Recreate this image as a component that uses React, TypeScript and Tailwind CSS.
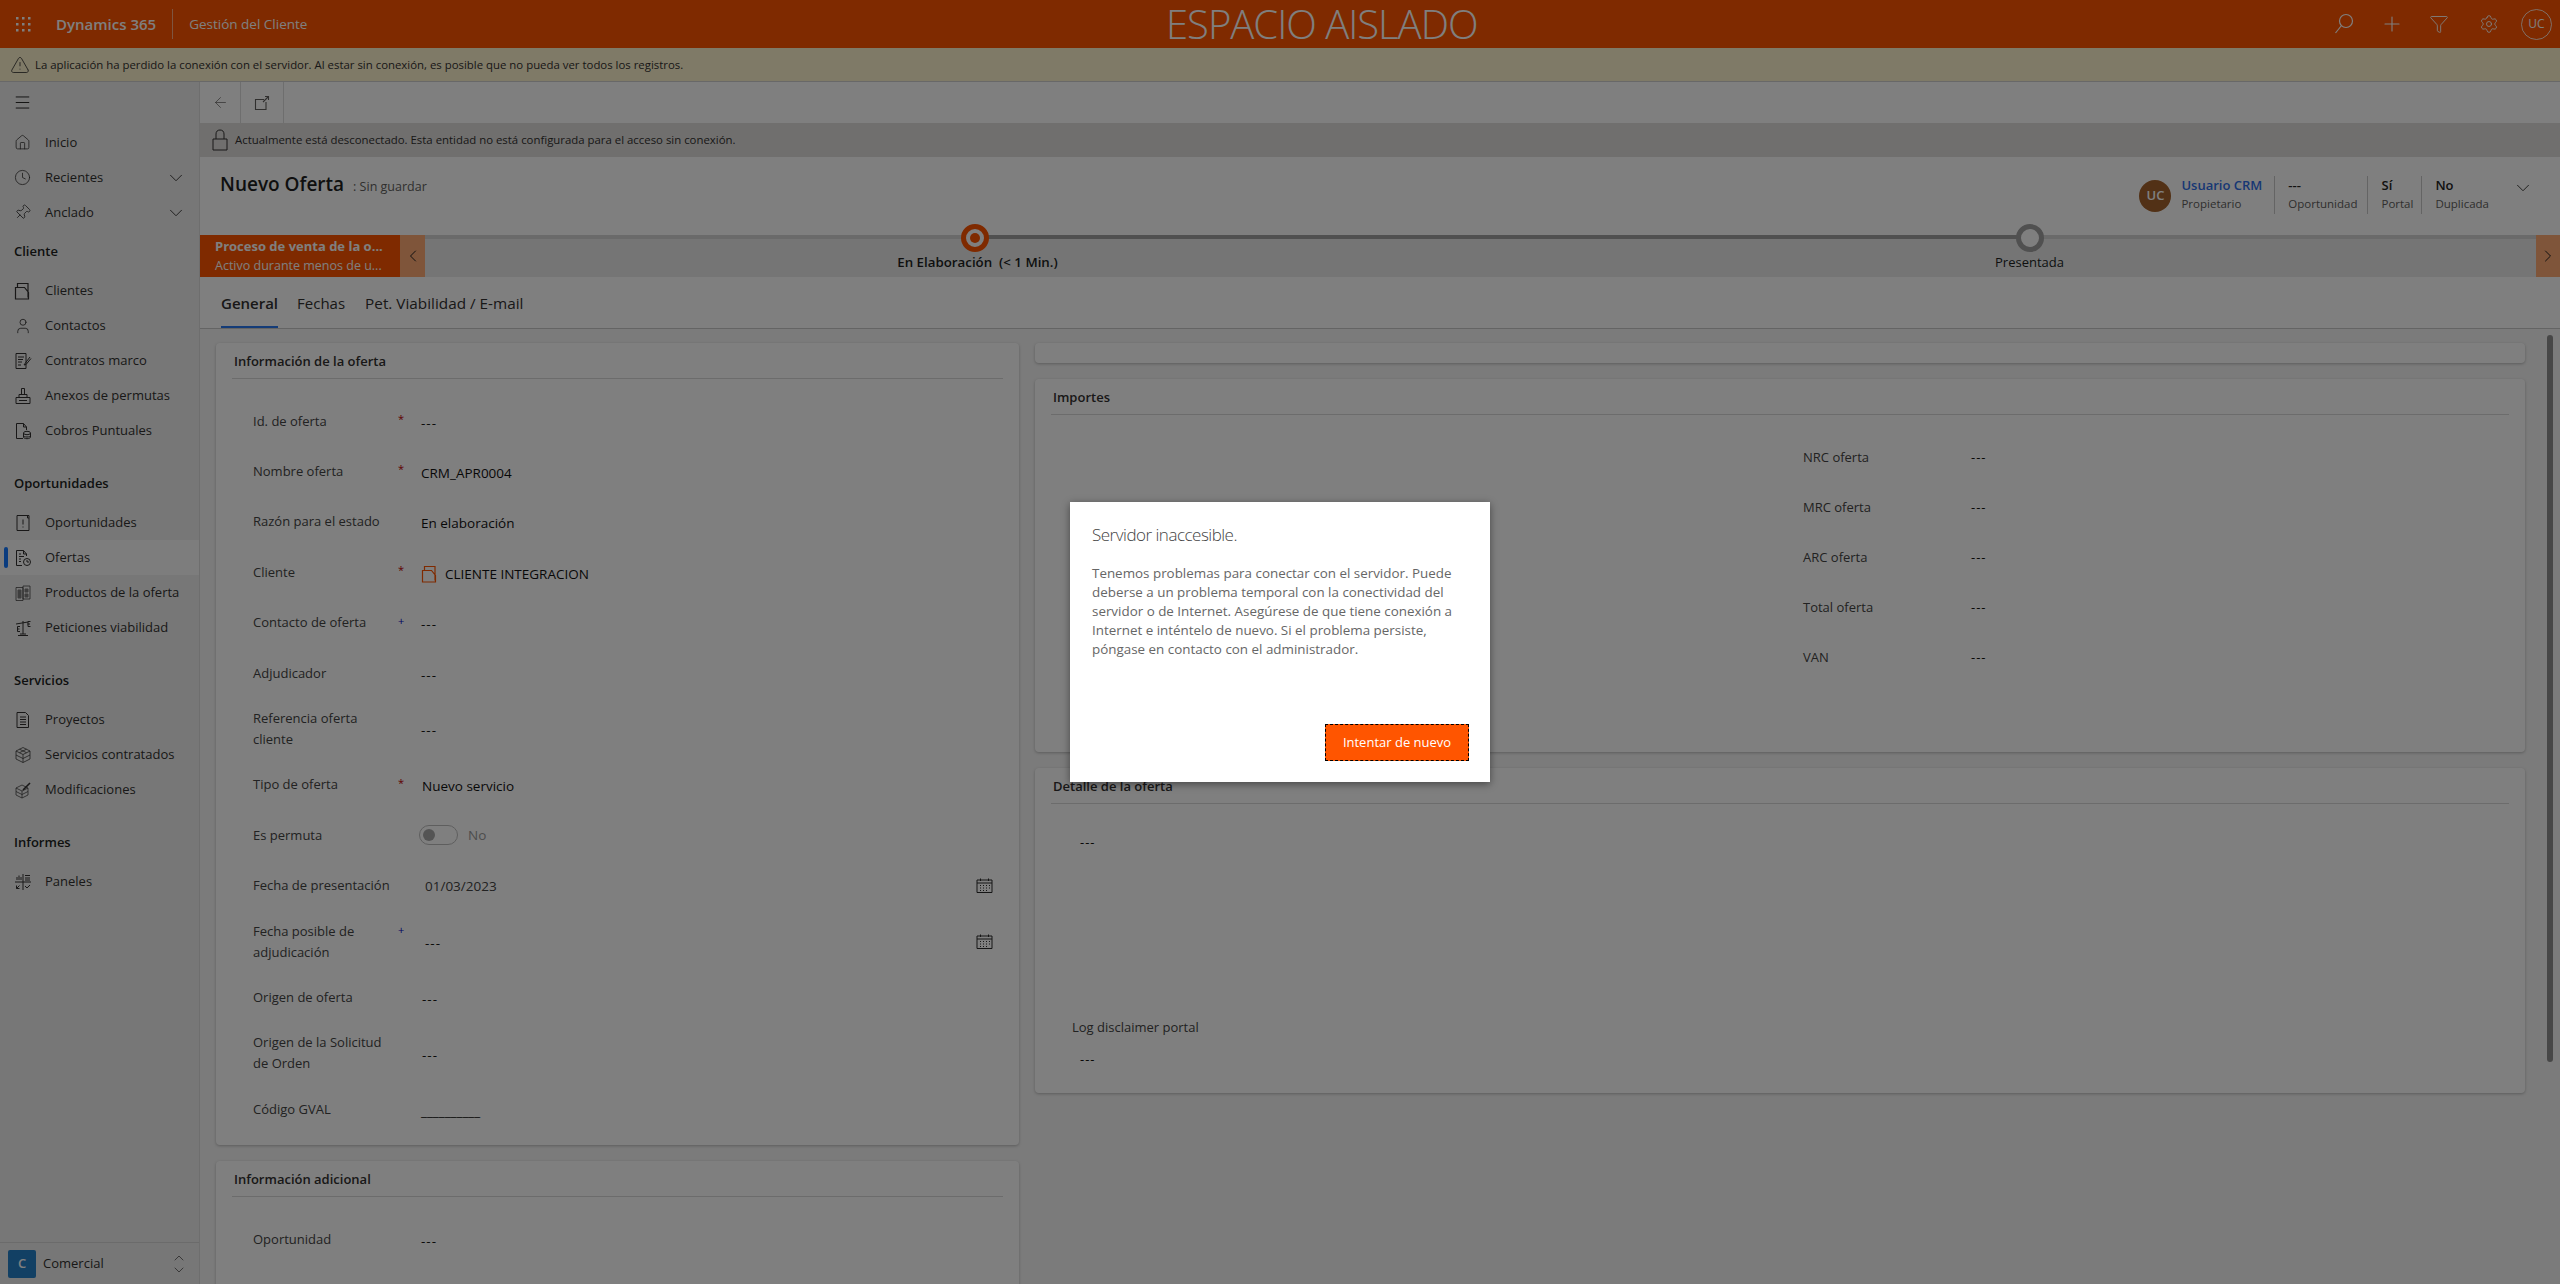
import type React from "react"
import { ChevronDown, ChevronLeft, ChevronRight, ChevronUp, Clock, Filter, Home, Menu, Pin, Plus, Settings, User, ArrowLeft, TriangleAlert } from "lucide-react"

const Doc: React.FC<{ children?: React.ReactNode }> = ({ children }) => (
  <svg width="18" height="18" viewBox="0 0 18 18" fill="none" stroke="currentColor" strokeWidth="1">
    {children}
  </svg>
)

const ClientIcon = ({ className = "" }: { className?: string }) => (
  <svg width="16" height="18" viewBox="0 0 16 18" fill="none" stroke="currentColor" strokeWidth="1.2" className={className}>
    <path d="M1.5 5.5h9l4 5v6.5h-13zM3.5 5.5v-4h10.500v14" />
  </svg>
)

const sideIcons: Record<string, React.ReactNode> = {
  clientes: <ClientIcon />,
  contactos: <User size={18} strokeWidth={1.1} />,
  contratos: (
    <Doc>
      <path d="M2 1.500h10v15H2zM4 5h6M4 7.500h5M4 10h4M4 13h3M16 5l-5 6.500-1 1.500 2-.5 5-6" />
    </Doc>
  ),
  anexos: (
    <Doc>
      <path d="M7.500 1.500h3v6h-3zM5 7.500h8v3H5zM2 10.500h14v6H2zM5 13.500h8" />
    </Doc>
  ),
  cobros: (
    <Doc>
      <path d="M9 16.500H2.500v-15h7l3 3.500v3M9.500 1.500V5h3" />
      <ellipse cx="13" cy="11" rx="3.500" ry="1.700" />
      <path d="M9.500 11v4c0 1 1.500 1.700 3.500 1.700s3.500-.7 3.500-1.700v-4M9.500 13.500c0 1 1.500 1.500 3.500 1.500s3.500-.5 3.500-1.500" />
    </Doc>
  ),
  oportunidades: (
    <Doc>
      <path d="M3 1.500h12v15H3zM15 4h-1.500V1.500M9 5.500v5M9 12.500v1" />
    </Doc>
  ),
  ofertas: (
    <Doc>
      <path d="M8 16.500H2.500v-15h7l3 3.500v2M9.500 1.500V5h3M5 5h2M5 7.500h5M5 10h2M5 12.500h2" />
      <circle cx="13" cy="13" r="3.500" />
      <path d="M13 11v2h2" />
    </Doc>
  ),
  productos: (
    <Doc>
      <path d="M2 3.500h7v13H2zM9 2h7v13H9z" opacity=".7" />
      <path d="M4 6h3v8H4zM11 5h3v3h-3zM11 10h3v3h-3z" fill="currentColor" opacity=".6" />
    </Doc>
  ),
  peticiones: (
    <Doc>
      <path d="M9 2v13M4 16.500h10M6 15h6M2 5l12-2" />
      <path d="M6 7.500H3.500v5H6M3 10h2.500M16.500 2.500h-2.500v5h2.500M13.500 5H16" />
    </Doc>
  ),
  proyectos: (
    <Doc>
      <path d="M3 1.500h8.500l3 3v12H3zM6 6h6M6 8.500h6M6 11h6M6 13.500h6" />
    </Doc>
  ),
  servicios: (
    <Doc>
      <path d="M9 1.500l7 3.500v8l-7 3.500L2 13V5zM2 5l7 3.500L16 5M9 8.500v8M5.500 3.200l7 3.500M12.500 3.200l-7 3.500M2 9l7 3.500L16 9" opacity=".75" />
    </Doc>
  ),
  modificaciones: (
    <Doc>
      <path d="M8 4l6 3v7l-6 3-6-3V7zM2 7l6 3 6-3M8 10v7M2 10.500l6 3 6-3" opacity=".7" />
      <path d="M9 9l7-7" strokeWidth="1.6" />
    </Doc>
  ),
  paneles: (
    <Doc>
      <path d="M9 1v16M1 9h16M11 2.500h5M11 5h5M11 7h5M3 7V4M5 7V2.500M7 7V4M11 13l2 2 3-3M2.500 15.500l3-3M2.500 12.500v3h3" />
    </Doc>
  ),
}

const NavItem = ({ icon, label, active, chevron }: { icon: React.ReactNode; label: string; active?: boolean; chevron?: boolean }) => (
  <div className={`relative flex h-[35px] items-center pl-[14px] pr-[12px] ${active ? "bg-[#fbfbfb]" : ""}`}>
    {active && <span className="absolute left-[4px] top-[7px] h-[21px] w-[4px] rounded-sm bg-[#1478ff]" />}
    <span className="flex w-[31px] shrink-0 text-[#323130]">{icon}</span>
    <span className="flex-1 text-[13px] text-[#323130]">{label}</span>
    {chevron && <ChevronDown size={22} strokeWidth={1} className="text-[#323130]" />}
  </div>
)

const NavGroup = ({ title, children, first }: { title: string; children: React.ReactNode; first?: boolean }) => (
  <div className={first ? "mt-[4px]" : "mt-[18px]"}>
    <div className="flex h-[35px] items-center pl-[14px] text-[13px] font-semibold text-[#201f1e]">{title}</div>
    <div className="mt-[4px]">{children}</div>
  </div>
)

const Sidebar = () => (
  <aside className="flex w-[200px] shrink-0 flex-col border-r border-[#dcdcdc] bg-[#efefef]">
    <div className="flex h-[41px] items-center pl-[13px] text-[#201f1e]">
      <Menu size={19} strokeWidth={1.2} />
    </div>
    <div className="flex-1 pt-[2px]">
      <NavItem icon={<Home size={17} strokeWidth={1.1} />} label="Inicio" />
      <NavItem icon={<Clock size={17} strokeWidth={1.1} />} label="Recientes" chevron />
      <NavItem icon={<Pin size={17} strokeWidth={1.1} className="rotate-45" />} label="Anclado" chevron />
      <NavGroup title="Cliente" first>
        <NavItem icon={sideIcons.clientes} label="Clientes" />
        <NavItem icon={sideIcons.contactos} label="Contactos" />
        <NavItem icon={sideIcons.contratos} label="Contratos marco" />
        <NavItem icon={sideIcons.anexos} label="Anexos de permutas" />
        <NavItem icon={sideIcons.cobros} label="Cobros Puntuales" />
      </NavGroup>
      <NavGroup title="Oportunidades">
        <NavItem icon={sideIcons.oportunidades} label="Oportunidades" />
        <NavItem icon={sideIcons.ofertas} label="Ofertas" active />
        <NavItem icon={sideIcons.productos} label="Productos de la oferta" />
        <NavItem icon={sideIcons.peticiones} label="Peticiones viabilidad" />
      </NavGroup>
      <NavGroup title="Servicios">
        <NavItem icon={sideIcons.proyectos} label="Proyectos" />
        <NavItem icon={sideIcons.servicios} label="Servicios contratados" />
        <NavItem icon={sideIcons.modificaciones} label="Modificaciones" />
      </NavGroup>
      <NavGroup title="Informes">
        <NavItem icon={sideIcons.paneles} label="Paneles" />
      </NavGroup>
    </div>
    <div className="flex h-[42px] items-center border-t border-[#d6d6d6] pl-[8px] pr-[12px]">
      <span className="flex h-[28px] w-[28px] items-center justify-center rounded-[2px] bg-[#2480c8] text-[13px] font-semibold text-white">C</span>
      <span className="ml-[7px] flex-1 text-[13px] text-[#323130]">Comercial</span>
      <span className="flex flex-col items-center text-[#323130]">
        <ChevronUp size={16} strokeWidth={1} className="-mb-[2px]" />
        <ChevronDown size={16} strokeWidth={1} className="-mt-[2px]" />
      </span>
    </div>
  </aside>
)

const CalendarIcon = () => (
  <svg width="17" height="15" viewBox="0 0 17 15" fill="none" stroke="#2a2a2a" strokeWidth="1">
    <path d="M1 2h15v12.500H1zM1 5h15M4.500 .5v2.500M12.500 .5v2.500" />
    <path d="M4 7.500h1M7 7.500h1M10 7.500h1M13 7.500h1M4 10h1M7 10h1M10 10h1M13 10h1M4 12.500h1M7 12.500h1M10 12.500h1" />
  </svg>
)

const Dash = () => <span className="tracking-[1px]">---</span>

const Field = ({ label, mark, tall, children, right }: { label: React.ReactNode; mark?: "req" | "rec"; tall?: boolean; children: React.ReactNode; right?: React.ReactNode }) => (
  <div className={`flex ${tall ? "h-[61.4px]" : "h-[50.4px]"} items-center pr-[26px]`}>
    <div className="w-[145px] shrink-0 text-[13px] leading-[21px] text-[#444]">{label}</div>
    <div className={`w-[23px] shrink-0 self-start text-[11px] leading-none ${tall ? "mt-[13px]" : "mt-[17px]"} ${mark === "req" ? "text-[#c00000]" : "text-[#0000c0]"}`}>
      {mark === "req" ? "*" : mark === "rec" ? "+" : ""}
    </div>
    <div className="flex-1 pt-[3px] text-[13.500px] font-medium text-[#111]">{children}</div>
    {right}
  </div>
)

const Card = ({ title, className = "", children }: { title?: string; className?: string; children?: React.ReactNode }) => (
  <section className={`rounded-[4px] bg-white shadow-[0_1px_3px_rgba(0,0,0,0.25)] ${className}`}>
    {title && (
      <div className="mx-[16px] flex h-[36px] items-center border-b border-[#d8d8d8] px-[2px] pt-[3px] text-[13px] font-semibold text-[#323130]">{title}</div>
    )}
    {children}
  </section>
)

const HeaderStat = ({ value, label, className }: { value: string; label: string; className: string }) => (
  <div className={`flex h-[38px] flex-col justify-start border-l border-[#c8c8c8] pl-[13px] ${className}`}>
    <span className="text-[13px] font-semibold leading-[18px] text-[#252423]">{value}</span>
    <span className="text-[11.500px] leading-[19px] text-[#605e5c]">{label}</span>
  </div>
)

export default function App() {
  return (
    <div className="relative flex h-screen w-full flex-col overflow-hidden bg-white [font-family:'Open_Sans','Liberation_Sans',sans-serif]">
      <header className="relative flex h-[48px] shrink-0 items-center bg-[#ff5500] text-white">
        <svg width="18" height="18" viewBox="0 0 18 18" fill="currentColor" className="ml-[14px]">
          {[2, 8, 14].map((y) => [2, 8, 14].map((x) => <rect key={`${x}-${y}`} x={x} y={y} width="2.500" height="2.500" />))}
        </svg>
        <span className="ml-[24px] text-[15px] font-semibold">Dynamics 365</span>
        <span className="ml-[16px] h-[30px] w-px bg-white/50" />
        <span className="ml-[16px] text-[13.500px]">Gestión del Cliente</span>
        <div className="absolute left-[1166px] top-0 text-[40px] font-light leading-[48px] tracking-tight text-[#ffffff]">ESPACIO AISLADO</div>
        <div className="ml-auto flex items-center pr-[8px]">
          <svg width="20" height="22" viewBox="0 0 20 22" fill="none" stroke="currentColor" strokeWidth="1.2" className="mr-[26px]">
            <circle cx="12" cy="8" r="6.500" />
            <path d="M7.500 12.500L1.500 20" />
          </svg>
          <Plus size={24} strokeWidth={1.1} className="mr-[25px]" />
          <Filter size={20} strokeWidth={1.1} className="mr-[30px]" />
          <Settings size={20} strokeWidth={1.1} className="mr-[22px]" />
          <span className="flex h-[31px] w-[31px] items-center justify-center rounded-full border border-white/80 text-[12px]">UC</span>
        </div>
      </header>

      <div className="flex h-[34px] shrink-0 items-center border-b border-[#d0d0d0] bg-[#fff4ce] pl-[10px] text-[11.400px] text-[#323130]">
        <TriangleAlert size={20} strokeWidth={1} className="mr-[5px]" />
        La aplicación ha perdido la conexión con el servidor. Al estar sin conexión, es posible que no pueda ver todos los registros.
      </div>

      <div className="flex min-h-0 flex-1">
        <Sidebar />
        <main className="flex min-w-0 flex-1 flex-col bg-[#f6f6f6]">
          <div className="flex h-[41px] shrink-0 items-center bg-white text-[#605e5c]">
            <span className="flex h-full w-[41px] items-center justify-center border-r border-[#dcdcdc]">
              <ArrowLeft size={17} strokeWidth={1} />
            </span>
            <span className="flex h-full w-[43px] items-center justify-center border-r border-[#dcdcdc]">
              <svg width="16" height="16" viewBox="0 0 16 16" fill="none" stroke="currentColor" strokeWidth="1.1">
                <path d="M10 4.500H1.500v10H12V7M9 7l5.500-5.500M11 1.500h3.500V5" />
              </svg>
            </span>
          </div>

          <div className="flex h-[34px] shrink-0 items-center bg-[#e1dfdd] pl-[12px] text-[11.400px] text-[#323130]">
            <svg width="16" height="22" viewBox="0 0 16 22" fill="none" stroke="currentColor" strokeWidth="1" className="mr-[7px]">
              <path d="M1 10h14v11H1zM4 10V5c0-2.500 1.500-4 4-4s4 1.500 4 4v5" />
            </svg>
            Actualmente está desconectado. Esta entidad no está configurada para el acceso sin conexión.
          </div>

          <div className="flex h-[78px] shrink-0 bg-white pl-[20px] pr-[26px]">
            <div className="pt-[13px]">
              <span className="text-[19px] font-semibold text-[#201f1e]">Nuevo Oferta</span>
              <span className="ml-[9px] text-[12.500px] text-[#605e5c]">: Sin guardar</span>
            </div>
            <div className="ml-auto flex items-start pt-[19px]">
              <span className="mt-[4px] flex h-[32px] w-[32px] items-center justify-center rounded-full bg-[#a4622c] text-[13px] font-semibold text-white">UC</span>
              <div className="flex h-[38px] flex-col justify-start pl-[10px] pr-[12px]">
                <span className="text-[13px] font-semibold leading-[18px] text-[#2f6fe8]">Usuario CRM</span>
                <span className="text-[11.500px] leading-[19px] text-[#605e5c]">Propietario</span>
              </div>
              <HeaderStat value="---" label="Oportunidad" className="pr-[10px]" />
              <HeaderStat value="Sí" label="Portal" className="pr-[8px]" />
              <HeaderStat value="No" label="Duplicada" className="pr-[13px]" />
              <ChevronDown size={22} strokeWidth={1} className="ml-[10px] mt-[1px] text-[#323130]" />
            </div>
          </div>

          <div className="relative flex h-[42px] shrink-0 bg-[#ebebeb]">
            <div className="absolute inset-x-0 top-0 h-[4px] bg-[#d4d4d4]" />
            <div className="absolute left-[774px] top-0 h-[4px] w-[1055px] bg-[#a0a0a0]" />
            <div className="relative flex w-[200px] shrink-0 flex-col justify-center bg-[#ff5500] pl-[15px] text-white">
              <span className="text-[13px] font-bold leading-[19px]">Proceso de venta de la o...</span>
              <span className="text-[12.500px] leading-[19px]">Activo durante menos de u...</span>
            </div>
            <div className="relative flex w-[25px] shrink-0 items-center justify-center bg-[#ffaa74] text-[#222]">
              <ChevronLeft size={20} strokeWidth={1.2} />
            </div>
            <div className="relative grid min-w-0 flex-1 grid-cols-[1055px_1fr] pl-[22px]">
              <div className="flex flex-col items-center">
                <span className="-mt-[11px] flex h-[28px] w-[28px] items-center justify-center rounded-full border-[5px] border-[#ff5500] bg-white">
                  <span className="h-[10px] w-[10px] rounded-full bg-[#ff5500]" />
                </span>
                <span className="mt-[1px] whitespace-pre pl-[6px] text-[13.300px] font-semibold text-[#201f1e]">En Elaboración  (&lt; 1 Min.)</span>
              </div>
              <div className="flex w-[1055px] flex-col items-center">
                <span className="-mt-[11px] h-[28px] w-[28px] rounded-full border-[5px] border-[#a0a0a0] bg-white" />
                <span className="mt-[1px] text-[13px] text-[#201f1e]">Presentada</span>
              </div>
            </div>
            <div className="relative flex w-[24px] shrink-0 items-center justify-center bg-[#ffaa74] text-[#222]">
              <ChevronRight size={20} strokeWidth={1.2} />
            </div>
          </div>

          <nav className="flex h-[52px] shrink-0 items-start gap-[19px] border-b border-[#c8c8c8] bg-white pl-[21px] pt-[15px] text-[15px] text-[#323130]">
            <span className="h-[36px] border-b-[2px] border-[#2878f0] font-semibold">General</span>
            <span>Fechas</span>
            <span className="ml-[1px] text-[15.300px]">Pet. Viabilidad / E-mail</span>
          </nav>

          <div className="relative min-h-0 flex-1 overflow-hidden pl-[16px] pt-[14px]">
            <div className="absolute right-[7px] top-[6px] h-[727px] w-[6px] rounded-full bg-[#8f8f8f]" />
            <div className="grid grid-cols-[803px_1490px] gap-x-[16px]">
              <div className="flex flex-col gap-[16px]">
                <Card title="Información de la oferta" className="h-[802px]">
                  <div className="pl-[37px] pt-[17px]">
                    <Field label="Id. de oferta" mark="req"><Dash /></Field>
                    <Field label="Nombre oferta" mark="req">CRM_APR0004</Field>
                    <Field label="Razón para el estado">En elaboración</Field>
                    <Field label="Cliente" mark="req">
                      <span className="flex items-center gap-[8px]">
                        <ClientIcon className="text-[#ff5500]" />
                        CLIENTE INTEGRACION
                      </span>
                    </Field>
                    <Field label="Contacto de oferta" mark="rec"><Dash /></Field>
                    <Field label="Adjudicador"><Dash /></Field>
                    <Field label={<>Referencia oferta<br />cliente</>} tall><Dash /></Field>
                    <Field label="Tipo de oferta" mark="req"><span className="pl-[1px]">Nuevo servicio</span></Field>
                    <Field label="Es permuta">
                      <span className="-ml-[2px] -mt-[3px] flex items-center">
                        <span className="flex h-[20px] w-[39px] items-center rounded-full border border-[#bdbdbd] pl-[3px]">
                          <span className="h-[12px] w-[12px] rounded-full bg-[#a8a8a8]" />
                        </span>
                        <span className="ml-[10px] font-normal text-[#9a9a9a]">No</span>
                      </span>
                    </Field>
                    <Field label="Fecha de presentación" right={<CalendarIcon />}>
                      <span className="-mt-[2px] block pl-[4px] font-normal text-[#444]">01/03/2023</span>
                    </Field>
                    <Field label={<>Fecha posible de<br />adjudicación</>} mark="rec" tall right={<CalendarIcon />}>
                      <span className="pl-[4px]"><Dash /></span>
                    </Field>
                    <Field label="Origen de oferta"><span className="pl-[1px]"><Dash /></span></Field>
                    <Field label={<>Origen de la Solicitud<br />de Orden</>} tall><span className="pl-[1px]"><Dash /></span></Field>
                    <Field label="Código GVAL"><span className="font-normal">__________</span></Field>
                  </div>
                </Card>
                <Card title="Información adicional" className="h-[300px]">
                  <div className="pl-[37px] pt-[17px]">
                    <Field label="Oportunidad"><Dash /></Field>
                  </div>
                </Card>
              </div>
              <div className="flex flex-col gap-[16px]">
                <Card className="h-[20px]" />
                <Card title="Importes" className="h-[373px]">
                  <div className="grid grid-cols-[768px_1fr] pt-[18px]">
                    <div className="pl-[40px] pt-[50px] text-[13px] text-[#444]">
                      <div className="flex h-[50px] items-center">VRC Viabilidad total</div>
                    </div>
                    <div>
                      {["NRC oferta", "MRC oferta", "ARC oferta", "Total oferta", "VAN"].map((label) => (
                        <div key={label} className="flex h-[50px] items-center text-[13px]">
                          <span className="w-[168px] text-[#444]">{label}</span>
                          <span className="font-medium text-[#111]"><Dash /></span>
                        </div>
                      ))}
                    </div>
                  </div>
                </Card>
                <Card title="Detalle de la oferta" className="h-[325px]">
                  <div className="pl-[45px] pt-[29px] text-[13px] font-medium text-[#111]"><Dash /></div>
                  <div className="pl-[37px] pt-[165px] text-[13px] text-[#444]">Log disclaimer portal</div>
                  <div className="pl-[45px] pt-[13px] text-[13px] font-medium text-[#111]"><Dash /></div>
                </Card>
              </div>
            </div>
          </div>
        </main>
      </div>

      <div className="absolute inset-0 flex items-center justify-center bg-black/50">
        <div className="flex h-[280px] w-[420px] flex-col bg-white pl-[22px] pr-[21px] pt-[18px] shadow-[0_2px_8px_rgba(0,0,0,0.45)]">
          <h1 className="text-[17px] font-light leading-[30px] tracking-[-0.5px] text-[#444]">Servidor inaccesible.</h1>
          <p className="mt-[14px] text-[13.400px] leading-[19px] text-[#666]">
            Tenemos problemas para conectar con el servidor. Puede<br />
            deberse a un problema temporal con la conectividad del<br />
            servidor o de Internet. Asegúrese de que tiene conexión a<br />
            Internet e inténtelo de nuevo. Si el problema persiste,<br />
            póngase en contacto con el administrador.
          </p>
          <div className="mt-auto flex justify-end pb-[21px]">
            <button type="button" className="h-[37px] w-[144px] border border-dashed border-black bg-[#ff5500] text-[13px] text-white">
              Intentar de nuevo
            </button>
          </div>
        </div>
      </div>
    </div>
  )
}
